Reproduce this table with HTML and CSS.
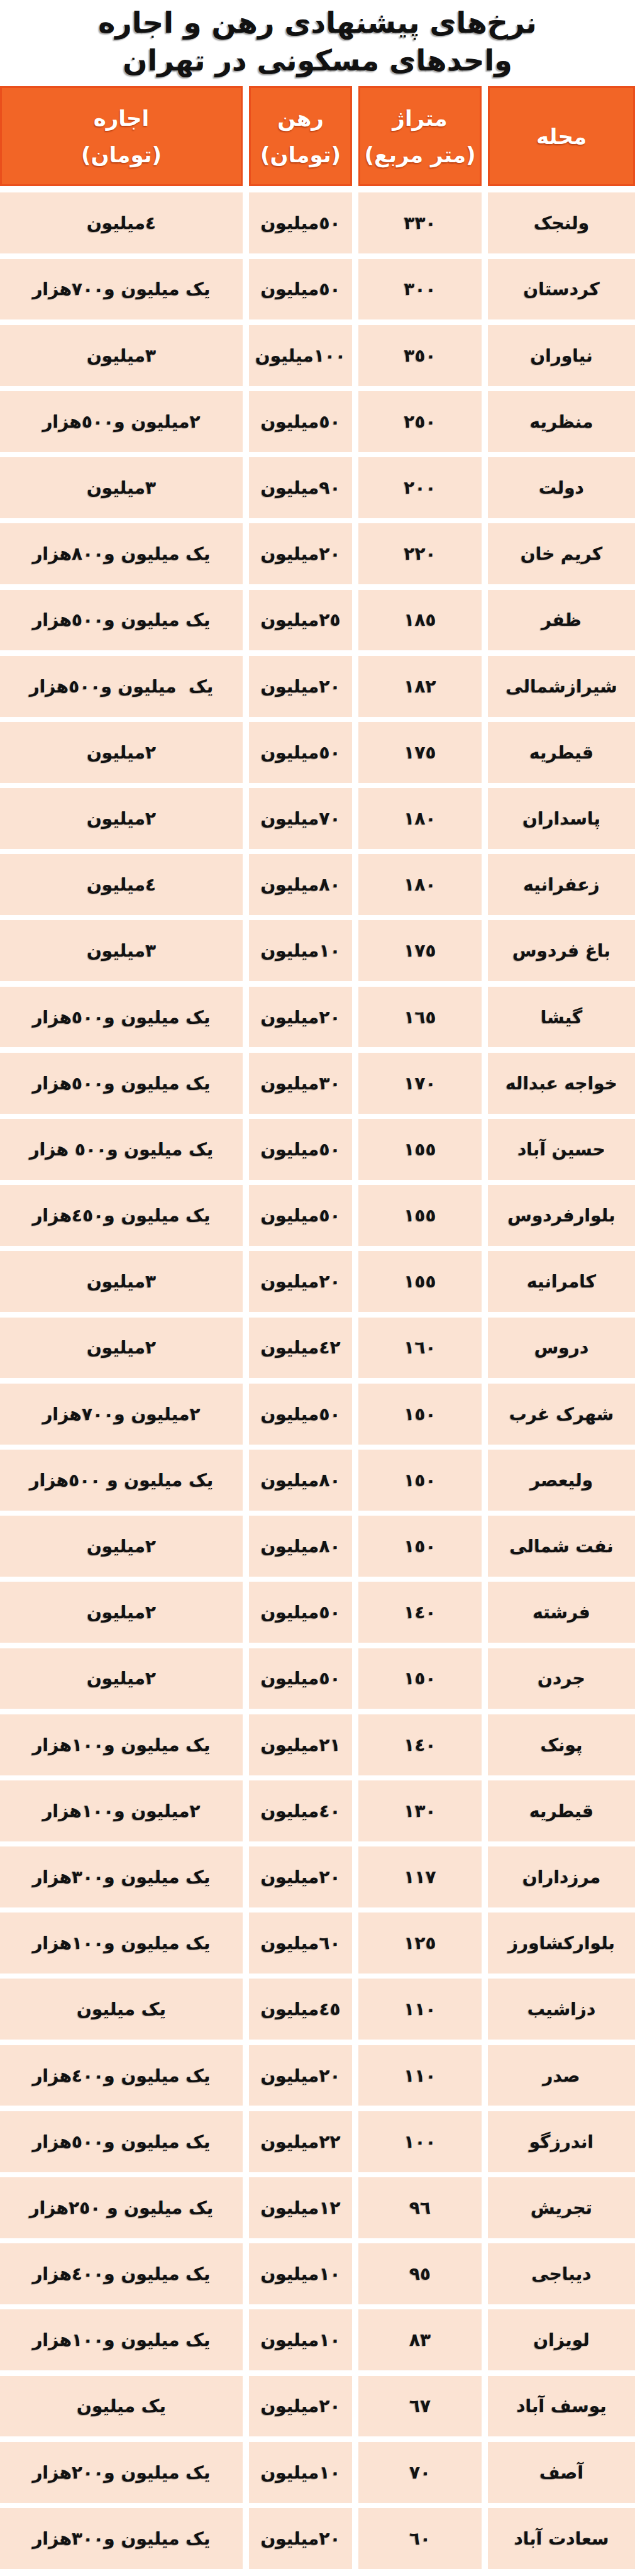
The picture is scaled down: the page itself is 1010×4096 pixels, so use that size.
FILE: index.html
```html
<!DOCTYPE html>
<html lang="fa" dir="rtl">
<head>
<meta charset="utf-8">
<title>نرخ‌های پیشنهادی رهن و اجاره واحدهای مسکونی در تهران</title>
<link rel="stylesheet" href="styles.css">
</head>
<body>
<div class="page">
  <h1 class="title">نرخ‌های پیشنهادی رهن و اجاره<br>واحدهای مسکونی در تهران</h1>
  <div class="table">
    <div class="th">محله</div>
    <div class="th">متراژ<br>(متر مربع)</div>
    <div class="th">رهن<br>(تومان)</div>
    <div class="th">اجاره<br>(تومان)</div>

    <div class="td">ولنجک</div><div class="td">٣٣٠</div><div class="td">٥٠میلیون</div><div class="td">٤میلیون</div>
    <div class="td">کردستان</div><div class="td">٣٠٠</div><div class="td">٥٠میلیون</div><div class="td">یک میلیون و٧٠٠هزار</div>
    <div class="td">نیاوران</div><div class="td">٣٥٠</div><div class="td">١٠٠میلیون</div><div class="td">٣میلیون</div>
    <div class="td">منظریه</div><div class="td">٢٥٠</div><div class="td">٥٠میلیون</div><div class="td">٢میلیون و٥٠٠هزار</div>
    <div class="td">دولت</div><div class="td">٢٠٠</div><div class="td">٩٠میلیون</div><div class="td">٣میلیون</div>
    <div class="td">کریم خان</div><div class="td">٢٢٠</div><div class="td">٢٠میلیون</div><div class="td">یک میلیون و٨٠٠هزار</div>
    <div class="td">ظفر</div><div class="td">١٨٥</div><div class="td">٢٥میلیون</div><div class="td">یک میلیون و٥٠٠هزار</div>
    <div class="td">شیرازشمالی</div><div class="td">١٨٢</div><div class="td">٢٠میلیون</div><div class="td">یک&nbsp; میلیون و٥٠٠هزار</div>
    <div class="td">قیطریه</div><div class="td">١٧٥</div><div class="td">٥٠میلیون</div><div class="td">٢میلیون</div>
    <div class="td">پاسداران</div><div class="td">١٨٠</div><div class="td">٧٠میلیون</div><div class="td">٢میلیون</div>
    <div class="td">زعفرانیه</div><div class="td">١٨٠</div><div class="td">٨٠میلیون</div><div class="td">٤میلیون</div>
    <div class="td">باغ فردوس</div><div class="td">١٧٥</div><div class="td">١٠میلیون</div><div class="td">٣میلیون</div>
    <div class="td">گیشا</div><div class="td">١٦٥</div><div class="td">٢٠میلیون</div><div class="td">یک میلیون و٥٠٠هزار</div>
    <div class="td">خواجه عبداله</div><div class="td">١٧٠</div><div class="td">٣٠میلیون</div><div class="td">یک میلیون و٥٠٠هزار</div>
    <div class="td">حسین آباد</div><div class="td">١٥٥</div><div class="td">٥٠میلیون</div><div class="td">یک میلیون و٥٠٠ هزار</div>
    <div class="td">بلوارفردوس</div><div class="td">١٥٥</div><div class="td">٥٠میلیون</div><div class="td">یک میلیون و٤٥٠هزار</div>
    <div class="td">کامرانیه</div><div class="td">١٥٥</div><div class="td">٢٠میلیون</div><div class="td">٣میلیون</div>
    <div class="td">دروس</div><div class="td">١٦٠</div><div class="td">٤٢میلیون</div><div class="td">٢میلیون</div>
    <div class="td">شهرک غرب</div><div class="td">١٥٠</div><div class="td">٥٠میلیون</div><div class="td">٢میلیون و٧٠٠هزار</div>
    <div class="td">ولیعصر</div><div class="td">١٥٠</div><div class="td">٨٠میلیون</div><div class="td">یک میلیون و ٥٠٠هزار</div>
    <div class="td">نفت شمالی</div><div class="td">١٥٠</div><div class="td">٨٠میلیون</div><div class="td">٢میلیون</div>
    <div class="td">فرشته</div><div class="td">١٤٠</div><div class="td">٥٠میلیون</div><div class="td">٢میلیون</div>
    <div class="td">جردن</div><div class="td">١٥٠</div><div class="td">٥٠میلیون</div><div class="td">٢میلیون</div>
    <div class="td">پونک</div><div class="td">١٤٠</div><div class="td">٢١میلیون</div><div class="td">یک میلیون و١٠٠هزار</div>
    <div class="td">قیطریه</div><div class="td">١٣٠</div><div class="td">٤٠میلیون</div><div class="td">٢میلیون و١٠٠هزار</div>
    <div class="td">مرزداران</div><div class="td">١١٧</div><div class="td">٢٠میلیون</div><div class="td">یک میلیون و٣٠٠هزار</div>
    <div class="td">بلوارکشاورز</div><div class="td">١٢٥</div><div class="td">٦٠میلیون</div><div class="td">یک میلیون و١٠٠هزار</div>
    <div class="td">دزاشیب</div><div class="td">١١٠</div><div class="td">٤٥میلیون</div><div class="td">یک میلیون</div>
    <div class="td">صدر</div><div class="td">١١٠</div><div class="td">٢٠میلیون</div><div class="td">یک میلیون و٤٠٠هزار</div>
    <div class="td">اندرزگو</div><div class="td">١٠٠</div><div class="td">٢٢میلیون</div><div class="td">یک میلیون و٥٠٠هزار</div>
    <div class="td">تجریش</div><div class="td">٩٦</div><div class="td">١٢میلیون</div><div class="td">یک میلیون و ٢٥٠هزار</div>
    <div class="td">دیباجی</div><div class="td">٩٥</div><div class="td">١٠میلیون</div><div class="td">یک میلیون و٤٠٠هزار</div>
    <div class="td">لویزان</div><div class="td">٨٣</div><div class="td">١٠میلیون</div><div class="td">یک میلیون و١٠٠هزار</div>
    <div class="td">یوسف آباد</div><div class="td">٦٧</div><div class="td">٢٠میلیون</div><div class="td">یک میلیون</div>
    <div class="td">آصف</div><div class="td">٧٠</div><div class="td">١٠میلیون</div><div class="td">یک میلیون و٢٠٠هزار</div>
    <div class="td">سعادت آباد</div><div class="td">٦٠</div><div class="td">٢٠میلیون</div><div class="td">یک میلیون و٣٠٠هزار</div>
  </div>
</div>
</body>
</html>
```

FILE: styles.css
```css
html, body {
  margin: 0;
  padding: 0;
  background: #ffffff;
}

body {
  font-family: "DejaVu Sans", "Noto Sans", sans-serif;
  color: #111111;
}

.page {
  width: 1010px;
  direction: rtl;
}

.title {
  margin: 0;
  height: 137px;
  box-sizing: border-box;
  padding-top: 6px;
  font-size: 46px;
  line-height: 60px;
  font-weight: bold;
  text-align: center;
  color: #111111;
  text-shadow: -2px 2px 2px rgba(0, 0, 0, 0.35);
}

.table {
  display: grid;
  grid-template-columns: 234px 196px 164px 386px;
  grid-template-rows: 161px;
  grid-auto-rows: 96.8px;
  column-gap: 10px;
  row-gap: 8.4px;
}

.th {
  display: flex;
  align-items: center;
  justify-content: center;
  text-align: center;
  background: #f26526;
  border: 3px solid #ea4f1c;
  box-sizing: border-box;
  color: #ffffff;
  font-weight: bold;
  font-size: 34px;
  line-height: 58px;
  text-shadow: -1px 2px 2px rgba(150, 40, 0, 0.55);
  margin-bottom: 1.6px;
}

.td {
  display: flex;
  align-items: center;
  justify-content: center;
  text-align: center;
  background: #fbe3d3;
  font-weight: bold;
  font-size: 28px;
  white-space: nowrap;
  color: #111111;
  text-shadow: -1px 1px 1px rgba(0, 0, 0, 0.3);
}
```
